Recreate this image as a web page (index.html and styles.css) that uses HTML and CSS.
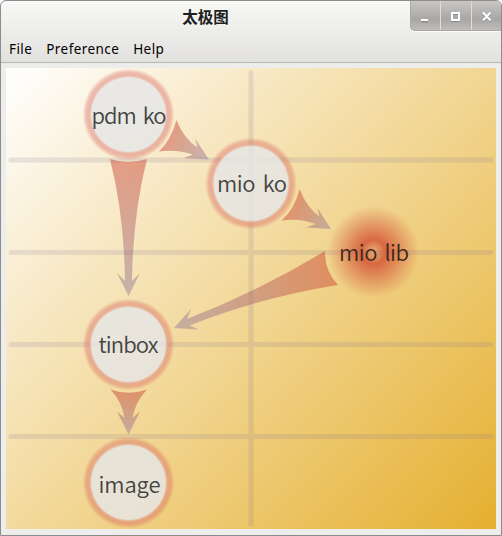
FILE: index.html
```html
<!DOCTYPE html>
<html lang="zh-CN">
<head>
<meta charset="utf-8">
<title>太极图</title>
<link rel="stylesheet" href="styles.css">
</head>
<body>
<div class="window">
  <header class="titlebar">
    <h1 class="title">太极图</h1>
    <div class="controls">
      <button class="control" aria-label="Minimize"><svg width="30" height="29"><path class="glyph-shade" d="M10 20.500h7"/><path class="glyph" d="M10 19h7"/></svg></button>
      <button class="control" aria-label="Maximize"><svg width="30" height="29"><path class="glyph-shade" d="M11 13h7v7h-7z"/><path class="glyph" d="M11 12h7v7h-7z"/></svg></button>
      <button class="control" aria-label="Close"><svg width="29" height="29"><path class="glyph-shade" d="M11 12.500l7.500 8m0-8l-7.500 8"/><path class="glyph" d="M11 11.500l7.500 8m0-8l-7.500 8"/></svg></button>
    </div>
  </header>
  <nav class="menubar"><span>File</span><span>Preference</span><span>Help</span></nav>
  <main class="content">
    <svg class="canvas" width="490" height="461" viewBox="6 68 490 461">
      <defs>
        <linearGradient id="paper" gradientUnits="userSpaceOnUse" x1="6" y1="68" x2="496" y2="529"><stop offset="0" stop-color="#fff"/><stop offset="1" stop-color="#e5b030"/></linearGradient>
        <radialGradient id="disc">
          <stop offset="0" stop-color="#e6e6e6" stop-opacity=".83"/><stop offset=".8" stop-color="#e6e6e6" stop-opacity=".83"/>
          <stop offset=".86" stop-color="#dc776c" stop-opacity=".5"/><stop offset=".92" stop-color="#d8665c" stop-opacity=".38"/><stop offset="1" stop-color="#d8665c" stop-opacity="0"/>
        </radialGradient>
        <radialGradient id="glow">
          <stop offset="0" stop-color="#d14a30" stop-opacity=".2"/><stop offset=".26" stop-color="#d14a30" stop-opacity=".78"/><stop offset="1" stop-color="#d14a30" stop-opacity="0"/>
        </radialGradient>
        <linearGradient id="a1" gradientUnits="userSpaceOnUse" x1="128" y1="159" x2="128" y2="296"><stop offset="0" stop-color="#cc4530"/><stop offset="1" stop-color="#9080a0"/></linearGradient>
        <linearGradient id="a2" gradientUnits="userSpaceOnUse" x1="168" y1="137" x2="209" y2="160"><stop offset="0" stop-color="#cc4530"/><stop offset="1" stop-color="#9080a0"/></linearGradient>
        <linearGradient id="a3" gradientUnits="userSpaceOnUse" x1="290" y1="206" x2="331" y2="229"><stop offset="0" stop-color="#cc4530"/><stop offset="1" stop-color="#9080a0"/></linearGradient>
        <linearGradient id="a4" gradientUnits="userSpaceOnUse" x1="332" y1="268" x2="174" y2="328"><stop offset="0" stop-color="#cc4530"/><stop offset="1" stop-color="#9080a0"/></linearGradient>
        <linearGradient id="a5" gradientUnits="userSpaceOnUse" x1="128" y1="390" x2="128" y2="434"><stop offset="0" stop-color="#cc4530"/><stop offset="1" stop-color="#9080a0"/></linearGradient>
      </defs>
      <rect x="6" y="68" width="490" height="461" fill="url(#paper)"/>
      <path class="grid" d="M11 160H491M11 252.500H491M11 344.500H491M11 436.500H491M251 73V524"/>
      <g class="arrows">
        <path fill="url(#a1)" d="M110 159Q128.500 165 147 159Q133 214 132 281L140 273L128.500 296L117 273L125 281Q124 214 110 159Z"/>
        <path fill="url(#a2)" d="M159 151.500Q171 140 176.500 120Q184 139 197.500 147.500L195 138.500L209 159.500L183.500 158L193 154.500Q177 149 159 151.500Z"/>
        <path fill="url(#a3)" d="M281.500 220.500Q295 209 299.500 189Q307 208 319.500 216.500L317.500 208L331 229L306 227.500L315.500 224Q300 218 281.500 220.500Z"/>
        <path fill="url(#a4)" d="M325 251Q324.500 271 338 285Q262 297 189.500 325.500L199 329.500L174 328L191 309L187 319Q259 291 325 251Z"/>
        <path fill="url(#a5)" d="M110.500 389.500Q128.500 396 147 389.500Q135 402 132.500 418L140 411.500L128.500 434.500L117 411.500L124.500 418Q122 402 110.500 389.500Z"/>
      </g>
      <circle cx="128.500" cy="114.500" r="46" fill="url(#disc)"/>
      <circle cx="251" cy="183.500" r="46" fill="url(#disc)"/>
      <circle cx="373.500" cy="252" r="46" fill="url(#glow)"/>
      <circle cx="128.500" cy="344.500" r="46" fill="url(#disc)"/>
      <circle cx="128.500" cy="482.500" r="46" fill="url(#disc)"/>
      <g class="labels">
        <text x="91.500" y="124" textLength="75">pdm ko</text>
        <text x="217" y="192" textLength="70">mio ko</text>
        <text class="active" x="339" y="261" textLength="70">mio lib</text>
        <text x="98.500" y="353" textLength="60">tinbox</text>
        <text x="98.500" y="493" textLength="62">image</text>
      </g>
    </svg>
  </main>
</div>
</body>
</html>
```
FILE: styles.css
```css
* { box-sizing: border-box; }
body { margin: 0; background: #fff; }
.window { width: 502px; height: 536px; border: 1px solid #8c8c8c; border-radius: 6px 6px 0 0; overflow: hidden; background: linear-gradient(#f8f8f7, #e2e1df 61px, #ededec 63px); display: flex; flex-direction: column; }
.titlebar { height: 35px; display: grid; grid-template-columns: 409px 91px; align-items: start; flex: none; }
.title { margin: 0; font: bold 15.500px/30px "Noto Sans CJK SC", sans-serif; text-align: center; color: #1d1f20; }
.controls { display: flex; height: 30px; border: 1px solid #aaa9a7; border-width: 0 0 1px 1px; border-radius: 0 0 0 5px; background: linear-gradient(#c8c7c6, #a8a7a6 18px, #bdbcba); overflow: hidden; box-shadow: 0 1px #fafafa; }
.control { width: 31px; padding: 0; border: 0; border-right: 1px solid #deddda; background: none; flex: none; }
.control:first-child { width: 30px; }
.control svg { display: block; }
.glyph, .glyph-shade { fill: none; stroke: #fff; stroke-width: 2; }
.glyph-shade { stroke: #898887; }
.menubar { height: 27px; flex: none; border-bottom: 1px solid #b9b8b7; padding-left: 8px; display: flex; gap: 14px; font: 13.500px/26px "Noto Sans", sans-serif; letter-spacing: .42px; color: #000; }
.content { padding: 5px; }
.canvas { display: block; }
.grid { fill: none; stroke: #8c7894; stroke-opacity: .18; stroke-width: 5; stroke-linecap: round; }
.arrows { opacity: .48; }
.labels { font: 350 22px "Noto Sans CJK SC", sans-serif; word-spacing: 3px; fill: #444441; }
.labels .active { fill: #40281c; }
```
